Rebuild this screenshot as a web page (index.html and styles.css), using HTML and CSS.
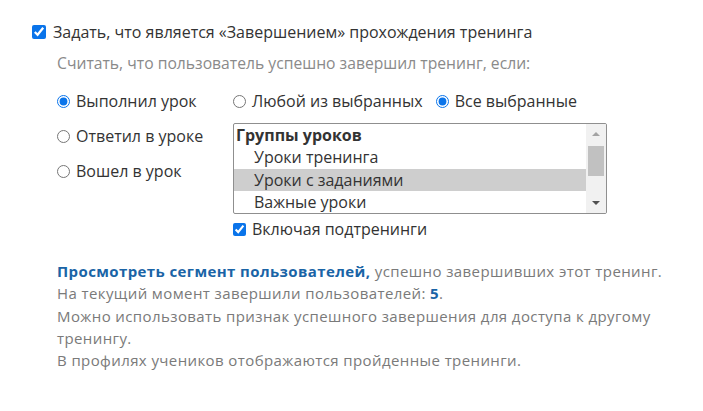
FILE: index.html
```html
<!DOCTYPE html>
<html lang="ru">
<head>
<meta charset="utf-8">
<link rel="stylesheet" href="styles.css">
</head>
<body>
<div class="page">
  <label class="main-check">
    <input type="checkbox" checked>
    <span>Задать, что является «Завершением» прохождения тренинга</span>
  </label>
  <div class="hint">Считать, что пользователь успешно завершил тренинг, если:</div>

  <div class="options">
    <div class="col-left">
      <label class="opt"><input type="radio" name="act" checked><span>Выполнил урок</span></label>
      <label class="opt"><input type="radio" name="act"><span>Ответил в уроке</span></label>
      <label class="opt"><input type="radio" name="act"><span>Вошел в урок</span></label>
    </div>
    <div class="col-right">
      <div class="mode">
        <label class="opt"><input type="radio" name="mode"><span>Любой из выбранных</span></label>
        <label class="opt"><input type="radio" name="mode" checked><span>Все выбранные</span></label>
      </div>
      <div class="listbox">
        <div class="list">
          <div class="group">Группы уроков</div>
          <div class="item">Уроки тренинга</div>
          <div class="item selected">Уроки с заданиями</div>
          <div class="item">Важные уроки</div>
        </div>
        <div class="scrollbar">
          <div class="arrow up"></div>
          <div class="track"><div class="thumb"></div></div>
          <div class="arrow down"></div>
        </div>
      </div>
      <label class="opt sub"><input type="checkbox" checked><span>Включая подтренинги</span></label>
    </div>
  </div>

  <div class="info">
    <p><a href="#" class="link">Просмотреть сегмент пользователей,</a> успешно завершивших этот тренинг.</p>
    <p>На текущий момент завершили пользователей: <b class="count">5</b>.</p>
    <p>Можно использовать признак успешного завершения для доступа к другому тренингу.</p>
    <p>В профилях учеников отображаются пройденные тренинги.</p>
  </div>
</div>
</body>
</html>
```
FILE: styles.css
```css
html, body {
  margin: 0;
  padding: 0;
  background: #fff;
}
body {
  font-family: "Open Sans", "Noto Sans", sans-serif;
  color: #333;
}
.page {
  padding: 22px 0 0 32px;
  width: 640px;
}
input {
  margin: 0;
  accent-color: #0a74ea;
}
input[type="checkbox"], input[type="radio"] {
  width: 13px;
  height: 13px;
  flex: none;
}
.main-check {
  display: flex;
  align-items: center;
  gap: 7px;
  font-size: 16px;
  line-height: 20px;
  color: #333;
}
.main-check input {
  width: 14px;
  height: 14px;
}
.hint {
  margin: 11px 0 0 25px;
  font-size: 15.7px;
  line-height: 20px;
  color: #8a8a8a;
}
.options {
  display: flex;
  margin: 17px 0 0 25px;
}
.col-left {
  width: 176px;
  display: flex;
  flex-direction: column;
  gap: 15px;
  padding-top: 1px;
}
.opt {
  display: flex;
  align-items: center;
  gap: 6px;
  font-size: 16px;
  line-height: 20px;
  color: #333;
}
.col-right {
  display: flex;
  flex-direction: column;
}
.mode {
  display: flex;
  gap: 13px;
  padding-top: 1px;
}
.listbox {
  margin-top: 12px;
  width: 372px;
  height: 89px;
  border: 1px solid #8f8f8f;
  border-radius: 2px;
  display: flex;
  overflow: hidden;
}
.list {
  flex: 1;
  font-size: 16px;
  line-height: 22.5px;
  color: #333;
}
.group {
  font-weight: 700;
  padding-left: 2px;
  height: 22px;
}
.item {
  padding-left: 20px;
  height: 22.5px;
}
.item.selected {
  background: #cecece;
}
.scrollbar {
  width: 20px;
  background: #f1f1f1;
  display: flex;
  flex-direction: column;
}
.arrow {
  height: 20px;
  position: relative;
}
.arrow::after {
  content: "";
  position: absolute;
  left: 6px;
  top: 8px;
  border-left: 4px solid transparent;
  border-right: 4px solid transparent;
}
.arrow.up::after {
  border-bottom: 4px solid #a3a3a3;
}
.arrow.down::after {
  border-top: 4px solid #505050;
}
.track {
  flex: 1;
  padding: 2px 2px 0;
}
.thumb {
  height: 30px;
  background: #c1c1c1;
}
.sub {
  margin-top: 5px;
}
.info {
  margin: 21px 0 0 25px;
  font-family: "Open Sans", "Noto Sans", sans-serif;
  font-size: 15px;
  letter-spacing: 0.4px;
  line-height: 22.3px;
  color: #7a7a7a;
  width: 618px;
}
.info p {
  margin: 0;
}
.link {
  color: #1a64a6;
  font-weight: 700;
  text-decoration: none;
}
.count {
  color: #1a64a6;
}
```
